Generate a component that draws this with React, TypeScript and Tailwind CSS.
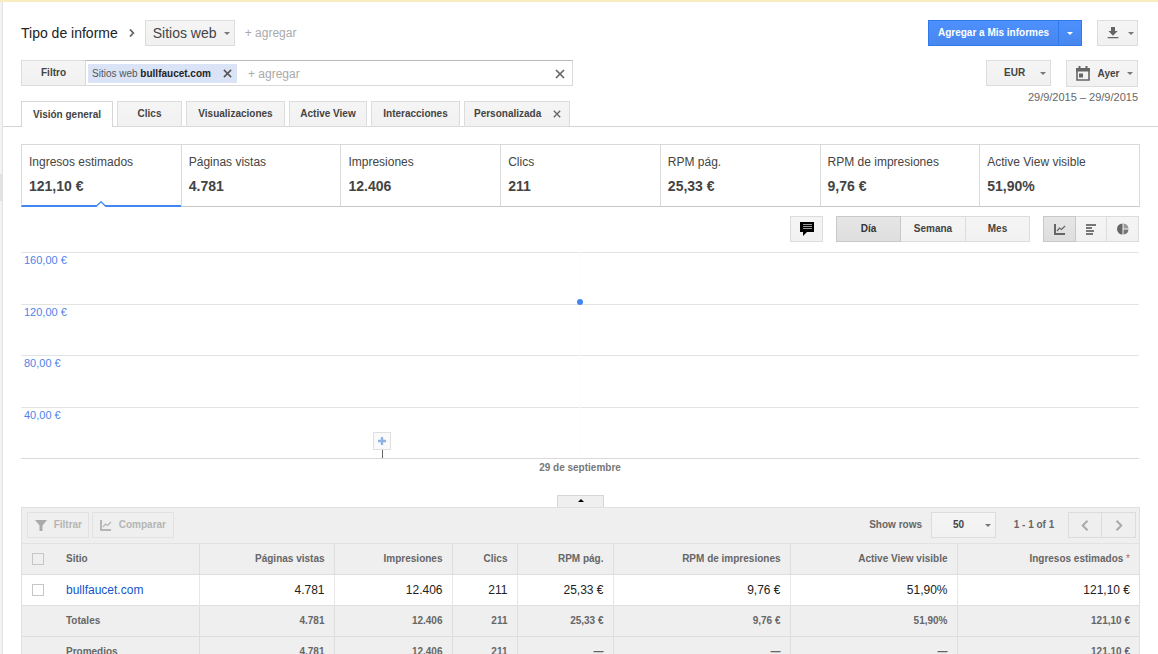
import type { ReactNode } from "react";

const GREY_BUTTON =
  "border border-[#dcdcdc] bg-linear-to-b from-[#f5f5f5] to-[#f1f1f1] text-[#444]";

const METRICS = [
  { label: "Ingresos estimados", value: "121,10 €" },
  { label: "Páginas vistas", value: "4.781" },
  { label: "Impresiones", value: "12.406" },
  { label: "Clics", value: "211" },
  { label: "RPM pág.", value: "25,33 €" },
  { label: "RPM de impresiones", value: "9,76 €" },
  { label: "Active View visible", value: "51,90%" },
];

const TABS = [
  { label: "Clics", width: "w-[65px]" },
  { label: "Visualizaciones", width: "w-[99px]" },
  { label: "Active View", width: "w-[78px]" },
  { label: "Interacciones", width: "w-[89px]" },
];

const AXIS = ["160,00 €", "120,00 €", "80,00 €", "40,00 €"];
const AXIS_MAX = 160;
const POINT = { position: 0.5, value: 121.1 };
const NOTE_POSITION = 0.323;

const COLUMNS = [
  { label: "Páginas vistas", width: "w-[135px]" },
  { label: "Impresiones", width: "w-[118px]" },
  { label: "Clics", width: "w-[65px]" },
  { label: "RPM pág.", width: "w-[96px]" },
  { label: "RPM de impresiones", width: "w-[177px]" },
  { label: "Active View visible", width: "w-[167px]" },
  { label: "Ingresos estimados", width: "w-auto" },
];

const SITE = ["4.781", "12.406", "211", "25,33 €", "9,76 €", "51,90%", "121,10 €"];
const AVERAGES = ["4.781", "12.406", "211", "—", "—", "—", "121,10 €"];

function Caret({ className = "" }: { className?: string }) {
  return (
    <svg className={`h-[3px] w-[6px] shrink-0 ${className}`} viewBox="0 0 6 3" fill="currentColor" aria-hidden="true">
      <path d="M0 0h6L3 3z" />
    </svg>
  );
}

function Cross({ className }: { className: string }) {
  return (
    <svg className={className} viewBox="0 0 10 10" fill="none" stroke="currentColor" strokeWidth="1.7" aria-hidden="true">
      <path d="M1 1l8 8M9 1L1 9" />
    </svg>
  );
}

function LineIcon() {
  return (
    <svg className="h-[11px] w-[12px]" viewBox="0 0 12 11" fill="none" stroke="currentColor" aria-hidden="true">
      <path d="M1 0v10h10" strokeWidth="2" />
      <path d="M3 7l2.500-3 2 1.500L11 2" strokeWidth="1.2" />
    </svg>
  );
}

function Dropdown({ label, options, className, textClass, caretClass }: {
  label: string;
  options: string[];
  className: string;
  textClass: string;
  caretClass: string;
}) {
  return (
    <span className={`relative block ${className}`}>
      <select aria-label={label} className={`block size-full appearance-none outline-none ${GREY_BUTTON} ${textClass}`}>
        {options.map((o) => (
          <option key={o}>{o}</option>
        ))}
      </select>
      <Caret className={`pointer-events-none absolute inset-y-0 my-auto text-[#777] ${caretClass}`} />
    </span>
  );
}

function SummaryRow({ title, values }: { title: string; values: string[] }) {
  return (
    <tr className="h-[31px] border-t border-[#dedede] bg-[#efefef] font-bold text-[#666]">
      <td />
      <th scope="row" className="text-left">{title}</th>
      {values.map((v, i) => (
        <td key={i} className="border-l border-[#dedede] pr-[9px] text-right">{v}</td>
      ))}
    </tr>
  );
}

function IconButton({ label, className, children }: { label: string; className: string; children: ReactNode }) {
  return (
    <button aria-label={label} className={`flex items-center justify-center ${className}`}>
      {children}
    </button>
  );
}

export default function App() {
  return (
    <div className="flex h-screen flex-col overflow-hidden border-t-2 border-[#f9edbe] bg-white font-['Liberation_Sans',Arial,sans-serif] text-[10px] leading-[14px] text-[#444]">
      <div className="flex min-h-0 grow">
        <aside className="w-[3px] shrink-0 border-r border-[#e2e2e2] bg-[#f3f3f3] pt-[172px]">
          <div className="h-[27px] bg-[#e2e2e2]" />
        </aside>

        <main className="min-w-0 grow">
          <header className="flex items-start justify-between border-b border-[#d6d6d6] pt-[18px] pr-[20px] pl-[18px]">
            <div className="w-[552px]">
              <div className="flex h-[26px] items-center">
                <h1 className="text-[14px] text-[#222]">Tipo de informe</h1>
                <svg className="mr-[10px] ml-[11px] h-[8px] w-[6px] text-[#666]" viewBox="0 0 6 8" fill="none" stroke="currentColor" strokeWidth="1.8" aria-hidden="true">
                  <path d="M1 .5L4.300 4 1 7.500" />
                </svg>
                <Dropdown
                  label="Tipo de informe"
                  options={["Sitios web"]}
                  className="h-[26px] w-[90px]"
                  textClass="pl-[7px] text-[14px]"
                  caretClass="right-[5px]"
                />
                <button className="ml-[10px] text-[12px] text-[#aaa]">+ agregar</button>
              </div>

              <div className="mt-[14px] flex h-[26px]">
                <button className={`w-[64px] border-r-0 font-bold ${GREY_BUTTON}`}>Filtro</button>
                <div className="flex min-w-0 grow items-center border border-t-[#b9b9b9] border-r-[#d9d9d9] border-b-[#d9d9d9] border-l-[#d9d9d9] pt-px pr-[7px] pl-[2px]">
                  <span className="flex h-[19px] items-center bg-[#dbe4f7] pr-[5px] pl-[4px] text-[#555]">
                    <span className="w-[131px] whitespace-nowrap">
                      Sitios web <b className="text-[#222]">bullfaucet.com</b>
                    </span>
                    <button aria-label="Quitar filtro" className="text-[#555]">
                      <Cross className="size-[9px]" />
                    </button>
                  </span>
                  <input
                    aria-label="Agregar filtro"
                    placeholder="+ agregar"
                    className="ml-[11px] min-w-0 grow text-[12px] outline-none placeholder:text-[#aaa]"
                  />
                  <button aria-label="Borrar filtros" className="text-[#666]">
                    <Cross className="size-[10px]" />
                  </button>
                </div>
              </div>

              <nav className="mt-[15px] -mb-px flex gap-[4px] font-bold">
                <button className="h-[26px] w-[92px] border border-b-0 border-[#d6d6d6] bg-white">Visión general</button>
                {TABS.map((t) => (
                  <button key={t.label} className={`h-[26px] ${t.width} ${GREY_BUTTON}`}>{t.label}</button>
                ))}
                <div className={`flex h-[26px] w-[106px] items-center justify-between pr-[8px] pl-[9px] ${GREY_BUTTON}`}>
                  <button>Personalizada</button>
                  <button aria-label="Cerrar pestaña" className="text-[#666]">
                    <Cross className="size-[8px]" />
                  </button>
                </div>
              </nav>
            </div>

            <div className="flex flex-col items-end">
              <div className="flex h-[26px] gap-[15px]">
                <div className="flex text-white">
                  <button className="w-[131px] border border-[#3079ed] bg-linear-to-b from-[#4d90fe] to-[#4787ed] font-bold">
                    Agregar a Mis informes
                  </button>
                  <IconButton label="Más opciones" className="w-[23px] border border-l-0 border-[#3079ed] bg-linear-to-b from-[#4d90fe] to-[#4787ed]">
                    <Caret />
                  </IconButton>
                </div>
                <IconButton label="Descargar" className={`w-[41px] gap-[7px] pl-[3px] ${GREY_BUTTON}`}>
                  <svg className="size-[16px] text-[#666]" viewBox="0 0 24 24" fill="currentColor" aria-hidden="true">
                    <path d="M19 9h-4V3H9v6H5l7 7 7-7zM4 18v2h16v-2H4z" />
                  </svg>
                  <Caret className="text-[#777]" />
                </IconButton>
              </div>
              <div className="mt-[14px] flex items-start gap-[15px]">
                <Dropdown
                  label="Moneda"
                  options={["EUR"]}
                  className="h-[26px] w-[65px]"
                  textClass="pl-[17px] font-bold"
                  caretClass="right-[5px]"
                />
                <button className={`flex h-[27px] w-[72px] items-center justify-between pr-[4px] pl-[9px] font-bold ${GREY_BUTTON}`}>
                  <svg className="h-[15px] w-[14px] text-[#666]" viewBox="0 0 14 15" aria-hidden="true">
                    <path d="M1 3.500h12V14H1z" fill="none" stroke="currentColor" strokeWidth="1.600" />
                    <path d="M0 2h14v3.500H0zM2.500 0h2v2h-2zM9.500 0h2v2h-2zM3 7.500h4v4H3z" fill="currentColor" />
                  </svg>
                  Ayer
                  <Caret className="text-[#777]" />
                </button>
              </div>
              <p className="mt-[3px] text-[11px] text-[#666]">29/9/2015 – 29/9/2015</p>
            </div>
          </header>

          <div className="pr-[18px] pl-[18px]">
            <section className="mt-[17px] grid grid-cols-7 border-t border-r border-[#d9d9d9]">
              {METRICS.map((m, i) => (
                <button
                  key={m.label}
                  className={`relative flex h-[62px] flex-col items-start gap-[4px] border-l border-l-[#d9d9d9] pt-[7px] pl-[7px] ${
                    i === 0 ? "border-b-2 border-b-[#4285f4]" : "border-b border-b-[#c8c8c8]"
                  }`}
                >
                  <span className="text-[12px] leading-[20px]">{m.label}</span>
                  <b className="text-[14px] leading-[20px]">{m.value}</b>
                  {i === 0 && (
                    <svg className="absolute -bottom-[2px] left-1/2 h-[6px] w-[12px] -translate-x-1/2" viewBox="0 0 12 6" aria-hidden="true">
                      <path d="M1 6l5-5 5 5z" fill="#fff" />
                      <path d="M1 5.500l5-4.700 5 4.700" fill="none" stroke="#4285f4" strokeWidth="1.300" />
                    </svg>
                  )}
                </button>
              ))}
            </section>

            <div className="mt-[9px] flex h-[26px] justify-end gap-[13px] pr-px">
              <IconButton label="Notas" className={`w-[33px] ${GREY_BUTTON}`}>
                <svg className="h-[14px] w-[14px]" viewBox="0 0 14 14" aria-hidden="true">
                  <path d="M0 0h14v10H7l-4 4v-4H0z" fill="#000" />
                  <path d="M3 2.500h9M3 4.500h9M3 6.500h9" stroke="#999" />
                </svg>
              </IconButton>
              <div className="flex font-bold">
                <button className="w-[65px] border border-[#c8c8c8] bg-linear-to-b from-[#e6e6e6] to-[#dedede] text-[#333]">Día</button>
                <button className={`w-[65px] border-l-0 ${GREY_BUTTON}`}>Semana</button>
                <button className={`-ml-px w-[65px] ${GREY_BUTTON}`}>Mes</button>
              </div>
              <div className="flex">
                <IconButton label="Gráfico de líneas" className="w-[33px] border border-[#c8c8c8] bg-linear-to-b from-[#e6e6e6] to-[#dedede] text-[#666]">
                  <LineIcon />
                </IconButton>
                <IconButton label="Gráfico de barras" className={`w-[31px] border-l-0 ${GREY_BUTTON}`}>
                  <svg className="h-[11px] w-[10px]" viewBox="0 0 10 11" stroke="#777" strokeWidth="2" aria-hidden="true">
                    <path d="M0 1h10M0 4h6M0 7h8M0 10h7" />
                  </svg>
                </IconButton>
                <IconButton label="Gráfico circular" className={`-ml-px w-[33px] ${GREY_BUTTON}`}>
                  <svg className="size-[12px]" viewBox="0 0 12 12" aria-hidden="true">
                    <path d="M5.500 0.500v11a5.500 5.500 0 0 1 0-11z" fill="#666" />
                    <path d="M6.500 .5a5.500 5.500 0 0 1 5 5h-5z" fill="#999" />
                    <path d="M6.500 6.500h5a5.500 5.500 0 0 1-5 5z" fill="#777" />
                  </svg>
                </IconButton>
              </div>
            </div>

            <figure className="mt-[10px] pr-px">
              <div className="relative grid h-[207px] grid-rows-4 border-b border-[#d9d9d9]">
                {AXIS.map((label) => (
                  <div key={label} className="border-t border-[#e3e3e3] pl-[3px] text-[11px] text-[#4f83e8]">{label}</div>
                ))}
                <span className="absolute inset-y-0 w-px bg-[#fbfbfb]" style={{ left: `${POINT.position * 100}%` }} />
                <span
                  className="absolute size-[6px] -translate-x-1/2 -translate-y-1/2 rounded-full bg-[#4285f4]"
                  style={{ left: `${POINT.position * 100}%`, top: `${(1 - POINT.value / AXIS_MAX) * 100}%` }}
                />
                <div className="absolute bottom-0 flex -translate-x-1/2 flex-col items-center" style={{ left: `${NOTE_POSITION * 100}%` }}>
                  <IconButton label="Agregar nota" className="size-[18px] border border-[#dfdfdf] bg-[#fafafa]">
                    <svg className="size-[8px]" viewBox="0 0 8 8" stroke="#8fb2e4" strokeWidth="2.400" aria-hidden="true">
                      <path d="M4 0v8M0 4h8" />
                    </svg>
                  </IconButton>
                  <span className="h-[8px] w-px bg-[#666]" />
                </div>
              </div>
              <figcaption className="mt-[2px] text-center font-bold text-[#777]">29 de septiembre</figcaption>
            </figure>

            <button aria-label="Ocultar gráfico" className="mx-auto mt-[20px] flex h-[12px] w-[47px] justify-center border border-b-0 border-[#d6d6d6] bg-[#efefef] pt-[3px] text-black">
              <Caret className="rotate-180" />
            </button>

            <section className="border border-[#e0e0e0] bg-[#efefef]">
              <div className="flex h-[35px] items-start pt-[4px] pr-[3px] pl-[5px] font-bold">
                <button className="flex h-[26px] w-[62px] items-center justify-between border border-[#e2e2e2] pr-[6px] pl-[7px] text-[#b5b5b5]">
                  <svg className="h-[11px] w-[12px] text-[#aaa]" viewBox="0 0 12 11" fill="currentColor" aria-hidden="true">
                    <path d="M0 0h12L7.500 5.500V11h-3V5.500z" />
                  </svg>
                  Filtrar
                </button>
                <button className="ml-[3px] flex h-[26px] w-[82px] items-center justify-between border border-[#e2e2e2] pr-[7px] pl-[7px] text-[#b5b5b5]">
                  <LineIcon />
                  Comparar
                </button>
                <label className="ml-auto flex items-center gap-[9px] text-[#666]">
                  Show rows
                  <Dropdown
                    label="Show rows"
                    options={["50"]}
                    className="h-[26px] w-[65px]"
                    textClass="pl-[21px] font-bold"
                    caretClass="right-[5px]"
                  />
                </label>
                <span className="w-[72px] pl-[4px] text-center leading-[26px] text-[#666]">1 - 1 of 1</span>
                <div className="flex h-[26px] text-[#aaa]">
                  <IconButton label="Anterior" className="w-[34px] border border-[#dcdcdc]">
                    <svg className="h-[11px] w-[8px]" viewBox="0 0 8 11" fill="none" stroke="currentColor" strokeWidth="2" aria-hidden="true">
                      <path d="M6.500 .7L1.700 5.500l4.800 4.800" />
                    </svg>
                  </IconButton>
                  <IconButton label="Siguiente" className="w-[34px] border border-l-0 border-[#dcdcdc]">
                    <svg className="h-[11px] w-[8px]" viewBox="0 0 8 11" fill="none" stroke="currentColor" strokeWidth="2" aria-hidden="true">
                      <path d="M1.500 .7l4.800 4.800-4.800 4.800" />
                    </svg>
                  </IconButton>
                </div>
              </div>

              <table className="w-full table-fixed border-collapse">
                <thead>
                  <tr className="h-[31px] border-t border-[#e2e2e2] text-[#666]">
                    <th className="w-[44px] pl-[10px]">
                      <input type="checkbox" aria-label="Seleccionar todo" className="block size-[12px] appearance-none border border-[#c6c6c6]" />
                    </th>
                    <th scope="col" className="w-[133px] text-left">Sitio</th>
                    {COLUMNS.map((c, i) => (
                      <th key={c.label} scope="col" className={`border-l border-[#dedede] pr-[9px] text-right ${c.width}`}>
                        {c.label}
                        {i === COLUMNS.length - 1 && <span className="font-normal text-[#b5695f]"> *</span>}
                      </th>
                    ))}
                  </tr>
                </thead>
                <tbody>
                  <tr className="h-[31px] border-t border-[#dedede] bg-white text-[12px] text-[#222]">
                    <td className="pl-[10px]">
                      <input type="checkbox" aria-label="Seleccionar bullfaucet.com" className="block size-[12px] appearance-none border border-[#c6c6c6]" />
                    </td>
                    <td>
                      <a href="#bullfaucet" className="text-[#15c]">bullfaucet.com</a>
                    </td>
                    {SITE.map((v, i) => (
                      <td key={i} className="border-l border-[#e6e6e6] pr-[9px] text-right">{v}</td>
                    ))}
                  </tr>
                  <SummaryRow title="Totales" values={SITE} />
                  <SummaryRow title="Promedios" values={AVERAGES} />
                </tbody>
              </table>
            </section>
          </div>
        </main>
      </div>
    </div>
  );
}
